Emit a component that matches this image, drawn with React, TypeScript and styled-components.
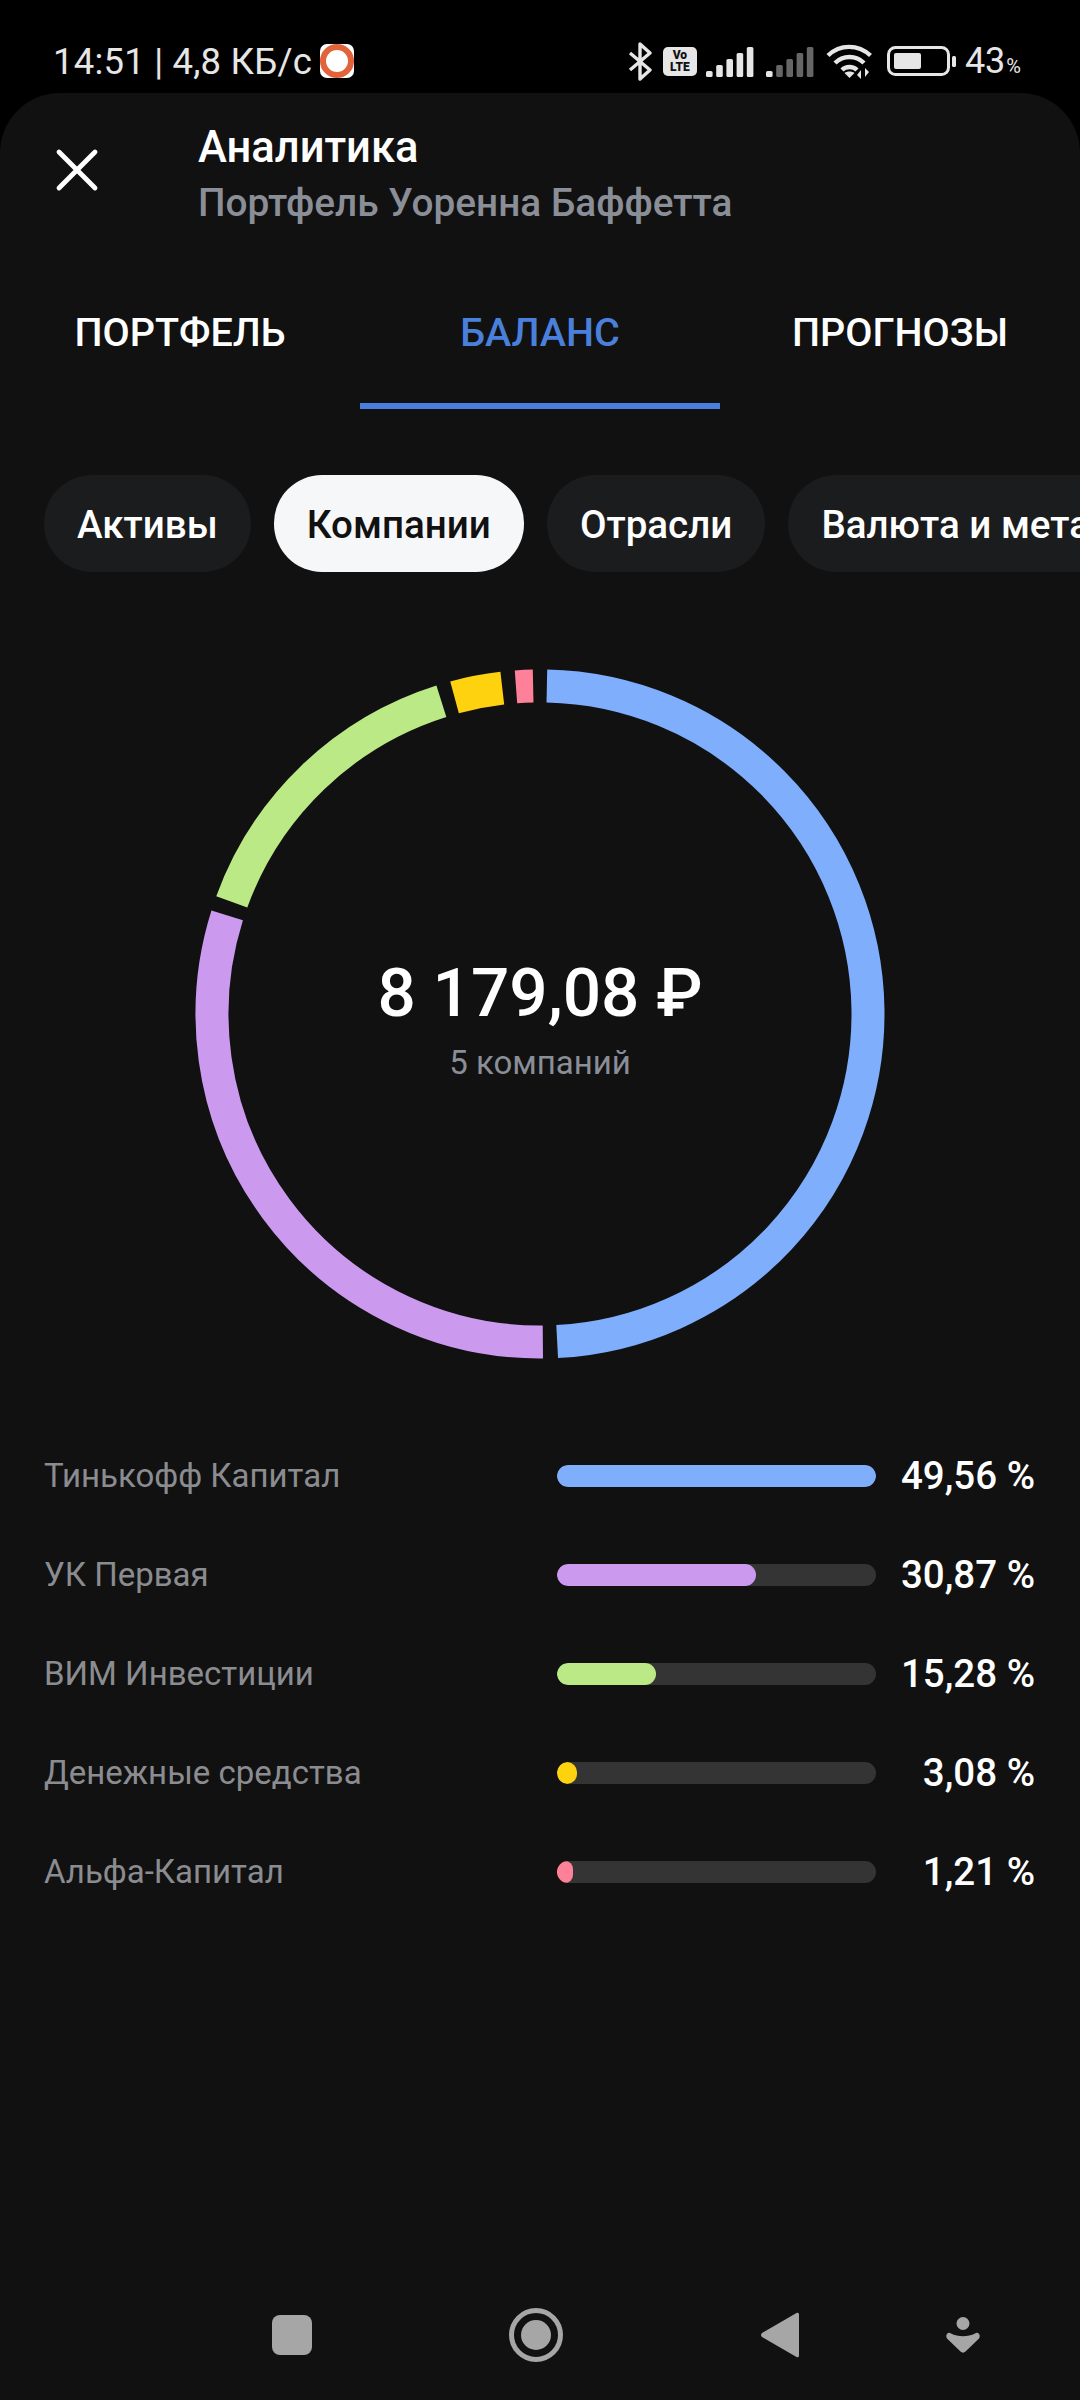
import styled, { createGlobalStyle } from 'styled-components';
import { X } from 'lucide-react';

const GlobalStyle = createGlobalStyle`
  html, body {
    margin: 0;
    padding: 0;
    background: #000;
  }
  * {
    box-sizing: border-box;
  }
`;

const Screen = styled.div`
  width: 1080px;
  height: 2400px;
  display: flex;
  flex-direction: column;
  overflow: hidden;
  background: #000;
  font-family: Roboto, 'Noto Sans', sans-serif;
  color: #fff;
`;

const StatusBar = styled.div`
  height: 93px;
  flex-shrink: 0;
  display: flex;
  justify-content: space-between;
  align-items: flex-start;
  padding: 41px 59px 0 53px;
`;

const StatusLeft = styled.div`
  display: flex;
  align-items: center;
  gap: 8px;
  height: 40px;
  font-size: 36.5px;
  color: #e6e6e6;
  letter-spacing: 0.2px;
`;

const RecordBadge = styled.div`
  width: 34px;
  height: 34px;
  border-radius: 7px;
  background: #fff;
  display: flex;
  align-items: center;
  justify-content: center;

  &::after {
    content: '';
    width: 22px;
    height: 22px;
    border-radius: 50%;
    border: 6px solid #e2623a;
  }
`;

const StatusRight = styled.div`
  display: flex;
  align-items: center;
  height: 40px;
  color: #e6e6e6;
`;

const VoLte = styled.div`
  width: 34px;
  height: 29px;
  margin: 0 9px 0 11px;
  border-radius: 5px;
  background: #e6e6e6;
  color: #111;
  font-size: 12px;
  font-weight: 900;
  line-height: 12px;
  text-align: center;
  padding-top: 2px;
`;

const BatteryLevel = styled.div`
  font-size: 36px;
  margin-left: 8px;
  display: flex;
  align-items: baseline;

  small {
    font-size: 20px;
    margin-left: 1px;
  }
`;

const Panel = styled.div`
  flex: 1;
  display: flex;
  flex-direction: column;
  background: #111112;
  border-radius: 60px 60px 0 0;
`;

const Header = styled.div`
  display: flex;
  align-items: center;
  gap: 85px;
  padding: 30px 0 0 41px;
`;

const CloseIcon = styled(X)`
  width: 72px;
  height: 72px;
  color: #fff;
  margin-top: -12px;
`;

const TitleBlock = styled.div`
  display: flex;
  flex-direction: column;
`;

const Title = styled.div`
  font-size: 43.5px;
  font-weight: 500;
  line-height: 50px;
`;

const Subtitle = styled.div`
  font-size: 38.8px;
  font-weight: 500;
  line-height: 50px;
  margin-top: 5px;
  color: #8a8e97;
`;

const Tabs = styled.div`
  display: grid;
  grid-template-columns: repeat(3, 360px);
  margin-top: 29px;
`;

const Tab = styled.div<{ $active?: boolean }>`
  height: 152px;
  padding-top: 51px;
  text-align: center;
  font-size: 39.5px;
  font-weight: 500;
  line-height: 50px;
  color: ${(props) => (props.$active ? '#4a80dc' : '#fff')};
  border-bottom: 6px solid ${(props) => (props.$active ? '#4a80dc' : 'transparent')};
`;

const Chips = styled.div`
  display: flex;
  gap: 23px;
  padding-left: 44px;
  margin-top: 66px;
  overflow: hidden;
`;

const Chip = styled.div<{ $active?: boolean }>`
  height: 97px;
  flex-shrink: 0;
  padding: 2px 33px 0;
  display: flex;
  align-items: center;
  border-radius: 48px;
  font-size: 38.6px;
  font-weight: 500;
  white-space: nowrap;
  background: ${(props) => (props.$active ? '#f6f7f8' : '#1b1c1e')};
  color: ${(props) => (props.$active ? '#111112' : '#fff')};
`;

const ChartWrap = styled.div`
  position: relative;
  width: 690px;
  height: 690px;
  margin: 97px auto 0;
`;

const ChartCenter = styled.div`
  position: absolute;
  inset: 0;
  display: flex;
  flex-direction: column;
  align-items: center;
  justify-content: center;
`;

const Total = styled.div`
  font-size: 67.5px;
  font-weight: 500;
  line-height: 76px;
  margin-top: 10px;
`;

const TotalCaption = styled.div`
  font-size: 33px;
  line-height: 40px;
  margin-top: 12px;
  color: #8a8e97;
`;

const Legend = styled.div`
  display: flex;
  flex-direction: column;
  gap: 54px;
  padding: 0 45px 0 44px;
  margin-top: 94px;
`;

const LegendRow = styled.div`
  display: flex;
  align-items: center;
  height: 45px;
`;

const LegendName = styled.div`
  width: 513px;
  font-size: 33px;
  color: #8b8c90;
`;

const Track = styled.div`
  width: 319px;
  height: 22px;
  border-radius: 11px;
  background: #343434;
  overflow: hidden;
`;

const Fill = styled.div<{ $color: string }>`
  height: 100%;
  border-radius: 11px;
  background: ${(props) => props.$color};
`;

const LegendValue = styled.div`
  flex: 1;
  text-align: right;
  font-size: 38.5px;
  font-weight: 500;
`;

const NavBar = styled.div`
  margin-top: auto;
  height: 92px;
  margin-bottom: 19px;
  display: flex;
  align-items: center;
  color: #a6a6a6;
`;

const NavSlot = styled.div<{ $left: number; $width: number }>`
  width: ${(props) => props.$width}px;
  margin-left: ${(props) => props.$left}px;
  display: flex;
  justify-content: center;
`;

const RADIUS = 328;
const CX = 345;
const CY = 345;

const polar = (deg: number) => {
  const rad = (deg * Math.PI) / 180;
  return [CX + RADIUS * Math.sin(rad), CY - RADIUS * Math.cos(rad)];
};

const arcPath = (from: number, to: number) => {
  const [x1, y1] = polar(from);
  const [x2, y2] = polar(to);
  const large = to - from > 180 ? 1 : 0;
  return `M ${x1} ${y1} A ${RADIUS} ${RADIUS} 0 ${large} 1 ${x2} ${y2}`;
};

const segments = [
  { from: 1.2, to: 177, color: '#7eaefc' },
  { from: 179.5, to: 287.5, color: '#cb9aee' },
  { from: 290, to: 342.5, color: '#bbe986' },
  { from: 344.9, to: 353.4, color: '#ffd20f' },
  { from: 355.8, to: 358.8, color: '#ff8099' },
];

const rows = [
  { name: 'Тинькофф Капитал', value: '49,56 %', width: 319, color: '#7eaefc' },
  { name: 'УК Первая', value: '30,87 %', width: 199, color: '#cb9aee' },
  { name: 'ВИМ Инвестиции', value: '15,28 %', width: 99, color: '#bbe986' },
  { name: 'Денежные средства', value: '3,08 %', width: 20, color: '#ffd20f' },
  { name: 'Альфа-Капитал', value: '1,21 %', width: 16, color: '#ff8099' },
];

const SignalIcon = ({ dim, left }: { dim?: boolean; left?: number }) => (
  <svg width="48" height="31" viewBox="0 0 48 31" style={{ marginLeft: left }}>
    {[0, 1, 2, 3, 4].map((i) => {
      const h = 6 + i * 6;
      return (
        <rect
          key={i}
          x={i * 10.2}
          y={31 - h}
          width="6.6"
          height={h}
          rx="1.6"
          fill={dim && i > 0 ? '#666' : '#e6e6e6'}
        />
      );
    })}
  </svg>
);

const App = () => {
  return (
    <Screen>
      <GlobalStyle />
      <StatusBar>
        <StatusLeft>
          <span>14:51 | 4,8 КБ/с</span>
          <RecordBadge />
        </StatusLeft>
        <StatusRight>
          <svg width="24" height="39" viewBox="0 0 24 39" fill="none" stroke="#e6e6e6" strokeWidth="3.4">
            <path d="M2 11 L22 28 L12 37 V2 L22 11 L2 28" strokeLinejoin="round" />
          </svg>
          <VoLte>
            Vo
            <br />
            LTE
          </VoLte>
          <SignalIcon />
          <SignalIcon dim left={12} />
          <svg width="48" height="36" viewBox="0 0 48 36" fill="none" stroke="#e6e6e6" strokeWidth="4.4" style={{ marginLeft: 12 }}>
            <path d="M2 12.5 C14 1 32 1 44.5 12.5" />
            <path d="M9 20 C17 12 30 12 38 20" />
            <path d="M16 27 C20 23 27 23 31 27" />
            <path d="M23.5 35 L18.5 30 C21 28 26 28 28.5 30 Z" fill="#e6e6e6" stroke="none" />
            <path d="M35 36 V27 L31 32 Z M39 25 V34 L43 29 Z" fill="#e6e6e6" stroke="none" />
          </svg>
          <svg width="70" height="30" viewBox="0 0 70 30" fill="none" style={{ marginLeft: 13 }}>
            <rect x="1.5" y="1.5" width="60" height="27" rx="7" stroke="#e6e6e6" strokeWidth="3" />
            <rect x="7" y="7" width="27" height="16" rx="2" fill="#e6e6e6" />
            <rect x="65" y="10" width="4" height="11" rx="1.5" fill="#e6e6e6" />
          </svg>
          <BatteryLevel>
            43<small>%</small>
          </BatteryLevel>
        </StatusRight>
      </StatusBar>
      <Panel>
        <Header>
          <CloseIcon strokeWidth={1.6} />
          <TitleBlock>
            <Title>Аналитика</Title>
            <Subtitle>Портфель Уоренна Баффетта</Subtitle>
          </TitleBlock>
        </Header>
        <Tabs>
          <Tab>ПОРТФЕЛЬ</Tab>
          <Tab $active>БАЛАНС</Tab>
          <Tab>ПРОГНОЗЫ</Tab>
        </Tabs>
        <Chips>
          <Chip>Активы</Chip>
          <Chip $active>Компании</Chip>
          <Chip>Отрасли</Chip>
          <Chip>Валюта и металлы</Chip>
        </Chips>
        <ChartWrap>
          <svg width="690" height="690" viewBox="0 0 690 690" fill="none">
            {segments.map((s) => (
              <path key={s.color} d={arcPath(s.from, s.to)} stroke={s.color} strokeWidth="33" />
            ))}
          </svg>
          <ChartCenter>
            <Total>8 179,08 ₽</Total>
            <TotalCaption>5 компаний</TotalCaption>
          </ChartCenter>
        </ChartWrap>
        <Legend>
          {rows.map((row) => (
            <LegendRow key={row.name}>
              <LegendName>{row.name}</LegendName>
              <Track>
                <Fill $color={row.color} style={{ width: row.width }} />
              </Track>
              <LegendValue>{row.value}</LegendValue>
            </LegendRow>
          ))}
        </Legend>
        <NavBar>
          <NavSlot $left={272} $width={40}>
            <svg width="40" height="40" viewBox="0 0 40 40">
              <rect width="40" height="40" rx="8" fill="currentColor" />
            </svg>
          </NavSlot>
          <NavSlot $left={197} $width={54}>
            <svg width="54" height="54" viewBox="0 0 54 54">
              <circle cx="27" cy="27" r="24.5" fill="none" stroke="currentColor" strokeWidth="5" />
              <circle cx="27" cy="27" r="15" fill="currentColor" />
            </svg>
          </NavSlot>
          <NavSlot $left={198} $width={38}>
            <svg width="38" height="46" viewBox="0 0 38 46">
              <path
                d="M35.5 1 C36.8 0.2 38 1 38 2.5 V43.5 C38 45 36.8 45.8 35.5 45 L1 25 C-0.3 24 -0.3 22 1 21 Z"
                fill="currentColor"
              />
            </svg>
          </NavSlot>
          <NavSlot $left={147} $width={34}>
            <svg width="34" height="36" viewBox="0 0 34 36">
              <ellipse cx="17" cy="6.5" rx="6.5" ry="6.5" fill="currentColor" />
              <path
                d="M1 17 C0 18 0 20 1 21.5 L14.5 34.5 C16 36 18 36 19.5 34.5 L33 21.5 C34 20 34 18 33 17 C32 15.5 30.5 15.5 29 16.5 C22 20 12 20 5 16.5 C3.5 15.5 2 15.5 1 17 Z"
                fill="currentColor"
              />
            </svg>
          </NavSlot>
        </NavBar>
      </Panel>
    </Screen>
  );
};

export default App;
